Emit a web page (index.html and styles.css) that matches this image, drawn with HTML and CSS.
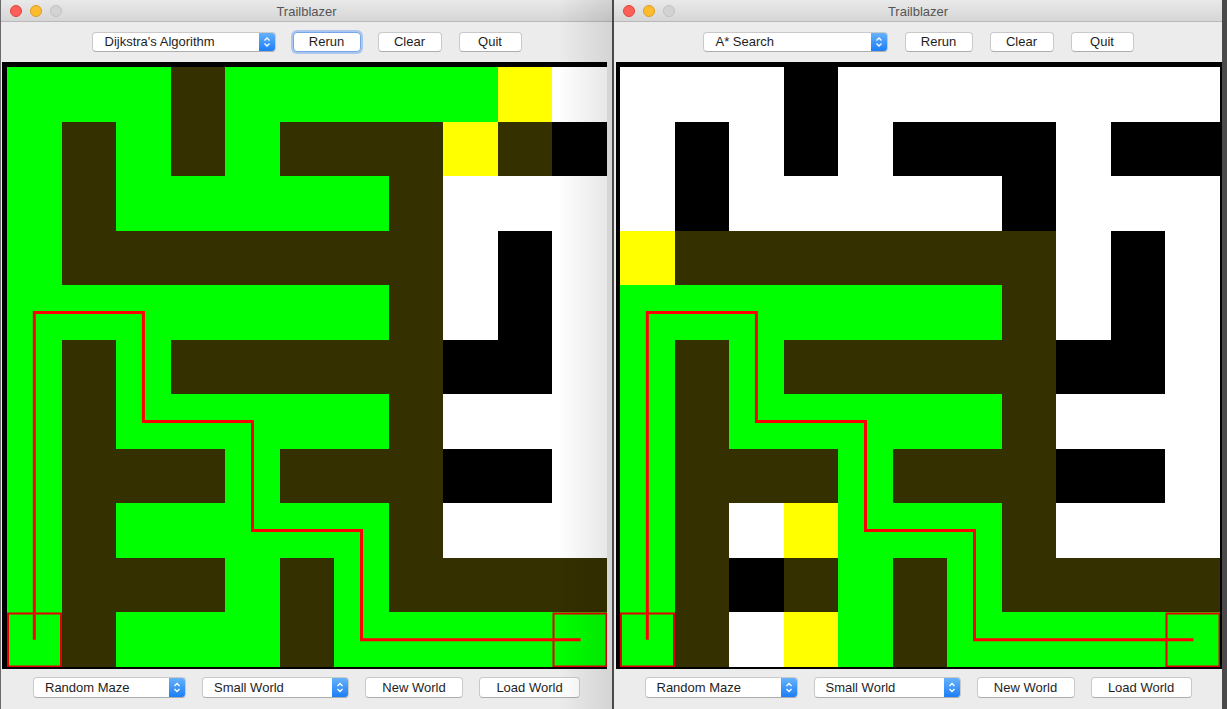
FILE: index.html
```html
<!DOCTYPE html>
<html>
<head>
<meta charset="utf-8">
<title>Trailblazer</title>
<link rel="stylesheet" href="styles.css">
</head>
<body>
<div class="desktop">

  <div class="window win-left">
    <div class="titlebar">
      <div class="lights"><span class="light red"></span><span class="light yellow"></span><span class="light gray"></span></div>
      <div class="title">Trailblazer</div>
      <div></div>
    </div>
    <div class="toolbar">
      <div class="popup w-algo"><span class="popup-label">Dijkstra's Algorithm</span><span class="stepper"><svg width="16" height="18" viewBox="0 0 16 18"><path d="M5.5 7.5 L8 5 L10.5 7.5 M5.5 10.5 L8 13 L10.5 10.5" fill="none" stroke="#fff" stroke-width="1.3"/></svg></span></div>
      <button class="btn w-rerun focused">Rerun</button>
      <button class="btn w-clear">Clear</button>
      <button class="btn w-quit">Quit</button>
    </div>
    <div class="board">
      <div class="grid">
        <i class="g"></i><i class="g"></i><i class="g"></i><i class="d"></i><i class="g"></i><i class="g"></i><i class="g"></i><i class="g"></i><i class="g"></i><i class="y"></i><i class="w"></i>
        <i class="g"></i><i class="d"></i><i class="g"></i><i class="d"></i><i class="g"></i><i class="d"></i><i class="d"></i><i class="d"></i><i class="y"></i><i class="d"></i><i class="k"></i>
        <i class="g"></i><i class="d"></i><i class="g"></i><i class="g"></i><i class="g"></i><i class="g"></i><i class="g"></i><i class="d"></i><i class="w"></i><i class="w"></i><i class="w"></i>
        <i class="g"></i><i class="d"></i><i class="d"></i><i class="d"></i><i class="d"></i><i class="d"></i><i class="d"></i><i class="d"></i><i class="w"></i><i class="k"></i><i class="w"></i>
        <i class="g"></i><i class="g"></i><i class="g"></i><i class="g"></i><i class="g"></i><i class="g"></i><i class="g"></i><i class="d"></i><i class="w"></i><i class="k"></i><i class="w"></i>
        <i class="g"></i><i class="d"></i><i class="g"></i><i class="d"></i><i class="d"></i><i class="d"></i><i class="d"></i><i class="d"></i><i class="k"></i><i class="k"></i><i class="w"></i>
        <i class="g"></i><i class="d"></i><i class="g"></i><i class="g"></i><i class="g"></i><i class="g"></i><i class="g"></i><i class="d"></i><i class="w"></i><i class="w"></i><i class="w"></i>
        <i class="g"></i><i class="d"></i><i class="d"></i><i class="d"></i><i class="g"></i><i class="d"></i><i class="d"></i><i class="d"></i><i class="k"></i><i class="k"></i><i class="w"></i>
        <i class="g"></i><i class="d"></i><i class="g"></i><i class="g"></i><i class="g"></i><i class="g"></i><i class="g"></i><i class="d"></i><i class="w"></i><i class="w"></i><i class="w"></i>
        <i class="g"></i><i class="d"></i><i class="d"></i><i class="d"></i><i class="g"></i><i class="d"></i><i class="g"></i><i class="d"></i><i class="d"></i><i class="d"></i><i class="d"></i>
        <i class="g"></i><i class="d"></i><i class="g"></i><i class="g"></i><i class="g"></i><i class="d"></i><i class="g"></i><i class="g"></i><i class="g"></i><i class="g"></i><i class="g"></i>
      </div>
      <svg class="route" width="600" height="600" viewBox="0 0 600 600">
        <rect class="mark" x="1" y="546.5" width="53" height="53"/>
        <rect class="mark" x="546.5" y="546.5" width="53" height="53"/>
        <polyline class="line" points="27.3,572.7 27.3,245.5 136.4,245.5 136.4,354.5 245.5,354.5 245.5,463.6 354.5,463.6 354.5,572.7 573.5,572.7"/>
      </svg>
    </div>
    <div class="bottombar">
      <div class="popup w-maze"><span class="popup-label">Random Maze</span><span class="stepper"><svg width="16" height="19" viewBox="0 0 16 19"><path d="M5.5 8 L8 5.5 L10.5 8 M5.5 11 L8 13.5 L10.5 11" fill="none" stroke="#fff" stroke-width="1.3"/></svg></span></div>
      <div class="popup w-size"><span class="popup-label">Small World</span><span class="stepper"><svg width="16" height="19" viewBox="0 0 16 19"><path d="M5.5 8 L8 5.5 L10.5 8 M5.5 11 L8 13.5 L10.5 11" fill="none" stroke="#fff" stroke-width="1.3"/></svg></span></div>
      <button class="btn w-new">New World</button>
      <button class="btn w-load">Load World</button>
    </div>
  </div>

  <div class="window win-right">
    <div class="titlebar">
      <div class="lights"><span class="light red"></span><span class="light yellow"></span><span class="light gray"></span></div>
      <div class="title">Trailblazer</div>
      <div></div>
    </div>
    <div class="toolbar">
      <div class="popup w-algo2"><span class="popup-label">A* Search</span><span class="stepper"><svg width="16" height="18" viewBox="0 0 16 18"><path d="M5.5 7.5 L8 5 L10.5 7.5 M5.5 10.5 L8 13 L10.5 10.5" fill="none" stroke="#fff" stroke-width="1.3"/></svg></span></div>
      <button class="btn w-rerun">Rerun</button>
      <button class="btn w-clear">Clear</button>
      <button class="btn w-quit">Quit</button>
    </div>
    <div class="board">
      <div class="grid">
        <i class="w"></i><i class="w"></i><i class="w"></i><i class="k"></i><i class="w"></i><i class="w"></i><i class="w"></i><i class="w"></i><i class="w"></i><i class="w"></i><i class="w"></i>
        <i class="w"></i><i class="k"></i><i class="w"></i><i class="k"></i><i class="w"></i><i class="k"></i><i class="k"></i><i class="k"></i><i class="w"></i><i class="k"></i><i class="k"></i>
        <i class="w"></i><i class="k"></i><i class="w"></i><i class="w"></i><i class="w"></i><i class="w"></i><i class="w"></i><i class="k"></i><i class="w"></i><i class="w"></i><i class="w"></i>
        <i class="y"></i><i class="d"></i><i class="d"></i><i class="d"></i><i class="d"></i><i class="d"></i><i class="d"></i><i class="d"></i><i class="w"></i><i class="k"></i><i class="w"></i>
        <i class="g"></i><i class="g"></i><i class="g"></i><i class="g"></i><i class="g"></i><i class="g"></i><i class="g"></i><i class="d"></i><i class="w"></i><i class="k"></i><i class="w"></i>
        <i class="g"></i><i class="d"></i><i class="g"></i><i class="d"></i><i class="d"></i><i class="d"></i><i class="d"></i><i class="d"></i><i class="k"></i><i class="k"></i><i class="w"></i>
        <i class="g"></i><i class="d"></i><i class="g"></i><i class="g"></i><i class="g"></i><i class="g"></i><i class="g"></i><i class="d"></i><i class="w"></i><i class="w"></i><i class="w"></i>
        <i class="g"></i><i class="d"></i><i class="d"></i><i class="d"></i><i class="g"></i><i class="d"></i><i class="d"></i><i class="d"></i><i class="k"></i><i class="k"></i><i class="w"></i>
        <i class="g"></i><i class="d"></i><i class="w"></i><i class="y"></i><i class="g"></i><i class="g"></i><i class="g"></i><i class="d"></i><i class="w"></i><i class="w"></i><i class="w"></i>
        <i class="g"></i><i class="d"></i><i class="k"></i><i class="d"></i><i class="g"></i><i class="d"></i><i class="g"></i><i class="d"></i><i class="d"></i><i class="d"></i><i class="d"></i>
        <i class="g"></i><i class="d"></i><i class="w"></i><i class="y"></i><i class="g"></i><i class="d"></i><i class="g"></i><i class="g"></i><i class="g"></i><i class="g"></i><i class="g"></i>
      </div>
      <svg class="route" width="600" height="600" viewBox="0 0 600 600">
        <rect class="mark" x="1" y="546.5" width="53" height="53"/>
        <rect class="mark" x="546.5" y="546.5" width="53" height="53"/>
        <polyline class="line" points="27.3,572.7 27.3,245.5 136.4,245.5 136.4,354.5 245.5,354.5 245.5,463.6 354.5,463.6 354.5,572.7 573.5,572.7"/>
      </svg>
    </div>
    <div class="bottombar">
      <div class="popup w-maze"><span class="popup-label">Random Maze</span><span class="stepper"><svg width="16" height="19" viewBox="0 0 16 19"><path d="M5.5 8 L8 5.5 L10.5 8 M5.5 11 L8 13.5 L10.5 11" fill="none" stroke="#fff" stroke-width="1.3"/></svg></span></div>
      <div class="popup w-size"><span class="popup-label">Small World</span><span class="stepper"><svg width="16" height="19" viewBox="0 0 16 19"><path d="M5.5 8 L8 5.5 L10.5 8 M5.5 11 L8 13.5 L10.5 11" fill="none" stroke="#fff" stroke-width="1.3"/></svg></span></div>
      <button class="btn w-new">New World</button>
      <button class="btn w-load">Load World</button>
    </div>
  </div>

</div>
</body>
</html>
```

FILE: styles.css
```css
* {
  box-sizing: border-box;
  margin: 0;
  padding: 0;
}

html, body {
  width: 1227px;
  height: 709px;
  overflow: hidden;
}

body {
  background: #3c3c3c;
  font-family: "Liberation Sans", Arial, sans-serif;
  font-size: 13px;
  color: #1e1e1e;
}

.desktop {
  display: flex;
  height: 709px;
  background: #4a4a4a;
}

.window {
  position: relative;
  display: flex;
  flex-direction: column;
  height: 709px;
  background: #ececec;
}

.win-left {
  width: 612px;
  border-left: 1px solid #6a6a6a;
}

.win-right {
  width: 608px;
  margin-left: 2px;
}

.win-left::after {
  content: "";
  position: absolute;
  top: 0;
  right: 0;
  bottom: 0;
  width: 55px;
  background: linear-gradient(to right, rgba(0, 0, 0, 0), rgba(0, 0, 0, 0.1));
  pointer-events: none;
}

/* title bar */
.titlebar {
  height: 22px;
  display: grid;
  grid-template-columns: 1fr auto 1fr;
  align-items: center;
  background: linear-gradient(#e9e9e9, #d6d6d6);
  border-bottom: 1px solid #b9b9b9;
}

.lights {
  display: flex;
  gap: 8px;
  padding-left: 9px;
  padding-top: 1px;
}

.light {
  width: 12px;
  height: 12px;
  border-radius: 50%;
}

.light.red {
  background: #fc5f57;
  border: 1px solid #e1443e;
}

.light.yellow {
  background: #fdbb2f;
  border: 1px solid #de9e22;
}

.light.gray {
  background: #d3d3d3;
  border: 1px solid #c1c1c1;
}

.title {
  color: #555555;
  font-size: 13px;
  padding-top: 1px;
}

/* toolbars */
.toolbar {
  height: 40px;
  display: flex;
  justify-content: center;
  align-items: center;
  gap: 17px;
}

.bottombar {
  flex: 1;
  display: flex;
  justify-content: center;
  align-items: flex-start;
  gap: 16px;
  padding-top: 8px;
}

.popup {
  display: flex;
  height: 20px;
  background: #fff;
  border: 1px solid #c9c9c9;
  border-bottom-color: #adadad;
  border-radius: 4px;
  overflow: hidden;
}

.bottombar .popup {
  height: 21px;
}

.popup-label {
  flex: 1;
  padding-left: 12px;
  line-height: 18px;
  white-space: nowrap;
}

.bottombar .popup-label {
  line-height: 19px;
  padding-left: 11px;
}

.stepper {
  width: 16px;
  display: flex;
  align-items: center;
  justify-content: center;
  background: linear-gradient(#66b1fb, #1c7ef7);
}

.btn {
  height: 20px;
  background: #fff;
  border: 1px solid #c9c9c9;
  border-bottom-color: #adadad;
  border-radius: 4px;
  font-family: "Liberation Sans", Arial, sans-serif;
  font-size: 13px;
  color: #1e1e1e;
  text-align: center;
  line-height: 18px;
}

.bottombar .btn {
  height: 21px;
  line-height: 19px;
}

.btn.focused {
  border-color: #77a5ea;
  box-shadow: 0 0 0 2px rgba(120, 170, 240, 0.55);
}

.w-algo { width: 184px; }
.w-algo2 { width: 185px; }
.w-rerun { width: 68px; }
.w-clear { width: 64px; }
.w-quit { width: 63px; }
.w-maze { width: 153px; }
.w-size { width: 147px; }
.w-new { width: 98px; }
.w-load { width: 101px; }

/* board */
.board {
  position: relative;
  align-self: flex-start;
  margin-left: 1px;
  border-style: solid;
  border-color: #000;
  border-width: 5px 0 2px 5px;
}

.win-right .board {
  margin-left: 2px;
  border-width: 5px 2px 2px 4px;
}

.grid {
  width: 600px;
  height: 600px;
  display: grid;
  grid-template-columns: repeat(11, 1fr);
  grid-template-rows: repeat(11, 1fr);
}

.grid i { display: block; }
.grid .g { background: #00ff00; }
.grid .d { background: #343000; }
.grid .y { background: #ffff00; }
.grid .w { background: #ffffff; }
.grid .k { background: #000000; }

.route {
  position: absolute;
  left: 0;
  top: 0;
}

.route .line {
  fill: none;
  stroke: #ff0000;
  stroke-width: 3;
  stroke-linejoin: miter;
}

.route .mark {
  fill: none;
  stroke: #e30000;
  stroke-width: 2;
}
```
